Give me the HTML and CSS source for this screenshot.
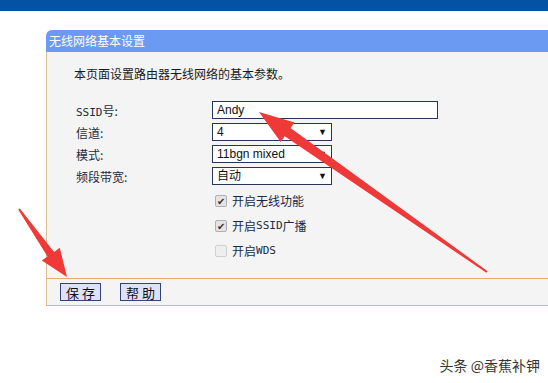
FILE: index.html
```html
<!DOCTYPE html>
<html lang="zh-CN">
<head>
    <meta charset="UTF-8">
    <title>无线网络基本设置</title>
    <link rel="stylesheet" href="styles.css">
</head>
<body>
    <div class="topbar"></div>

    <div class="panel">
        <div class="panel-title">无线网络基本设置</div>
        <div class="panel-body">
            <p class="desc">本页面设置路由器无线网络的基本参数。</p>

            <div class="form">
                <span class="label"><span class="mono">SSID</span>号:</span>
                <div class="field text-field">Andy</div>

                <span class="label">信道:</span>
                <div class="field select-field">4<span class="caret">▼</span></div>

                <span class="label">模式:</span>
                <div class="field select-field">11bgn mixed<span class="caret">▼</span></div>

                <span class="label">频段带宽:</span>
                <div class="field select-field">自动<span class="caret">▼</span></div>
            </div>

            <div class="checks">
                <label class="check"><span class="box checked">✔</span>开启无线功能</label>
                <label class="check"><span class="box checked">✔</span>开启<span class="mono">SSID</span>广播</label>
                <label class="check"><span class="box off"></span>开启<span class="mono">WDS</span></label>
            </div>
        </div>
        <div class="panel-foot">
            <button class="btn">保 存</button>
            <button class="btn">帮 助</button>
        </div>
    </div>

    <div class="watermark">头条 @香蕉补钾</div>

    <svg class="arrows" width="548" height="383" viewBox="0 0 548 383">
        <polygon fill="#ef3838" points="259,112 294.5,122.4 290.5,128.1 487.6,271.2 486.4,272.8 284.7,136.3 280.7,142"/>
        <polygon fill="#ef3838" points="67,277 41.8,260.6 47.5,256.5 18.2,209.6 19.8,208.4 54.1,251.9 59.8,247.8"/>
    </svg>
</body>
</html>
```

FILE: styles.css
```css
* {
    margin: 0;
    padding: 0;
    box-sizing: border-box;
}
body {
    position: relative;
    width: 548px;
    height: 383px;
    overflow: hidden;
    background: #ffffff;
    font-family: "Noto Sans CJK SC", sans-serif;
    font-size: 12px;
    color: #1c2a44;
}
.topbar {
    height: 11px;
    background-color: #0352a4;
}
.panel {
    margin: 19px 0 0 46px;
}
.panel-title {
    height: 22px;
    line-height: 22px;
    padding-left: 3px;
    background-color: #6a9af2;
    color: #ffffff;
    border-top-left-radius: 6px;
}
.panel-body {
    height: 226px;
    padding: 14px 0 0 27px;
    background-color: #f4f4f4;
    border-left: 1px solid #d8bc94;
}
.desc {
    line-height: 16px;
    color: #1a1a1a;
}
.form {
    display: grid;
    grid-template-columns: 136px auto;
    grid-auto-rows: 22px;
    align-items: center;
    margin: 17px 0 0 2px;
}
.field {
    height: 18px;
    line-height: 16px;
    padding-left: 4px;
    background: #ffffff;
    border: 1px solid #26365a;
    font-family: "Liberation Sans", Arial, sans-serif;
    font-size: 12px;
    color: #111;
}
.text-field {
    width: 226px;
}
.select-field {
    display: flex;
    justify-content: space-between;
    width: 120px;
    padding-right: 4px;
    font-family: "Liberation Sans", "Noto Sans CJK SC", sans-serif;
}
.caret {
    font-size: 9px;
    color: #111;
}
.checks {
    margin: 1px 0 0 141px;
}
.check {
    display: flex;
    align-items: center;
    height: 25px;
}
.box {
    display: inline-flex;
    align-items: center;
    justify-content: center;
    width: 12px;
    height: 12px;
    margin-right: 5px;
    border: 1px solid #b0b0b0;
    border-radius: 2px;
    background: #e4e4e4;
    font-size: 10px;
    color: #333;
}
.box.off {
    border-color: #cfcfcf;
    background: #eeeeee;
}
.mono {
    font-family: "DejaVu Sans Mono", monospace;
    font-size: 11px;
}
.panel-foot {
    display: flex;
    gap: 19px;
    height: 28px;
    padding: 4px 0 0 13px;
    background-color: #f4f4f4;
    border-left: 1px solid #d8bc94;
    border-top: 1px solid #e6ad6c;
    border-bottom: 1px solid #dcb488;
}
.btn {
    width: 41px;
    height: 18px;
    background-color: #dfe1fa;
    border: 1px solid #34427a;
    font-family: "Noto Sans CJK SC", sans-serif;
    font-size: 13px;
    line-height: 15px;
    color: #111;
}
.watermark {
    margin-top: 49px;
    padding-right: 8px;
    text-align: right;
    font-size: 14px;
    color: #333;
}
.arrows {
    position: absolute;
    left: 0;
    top: 0;
}
```
